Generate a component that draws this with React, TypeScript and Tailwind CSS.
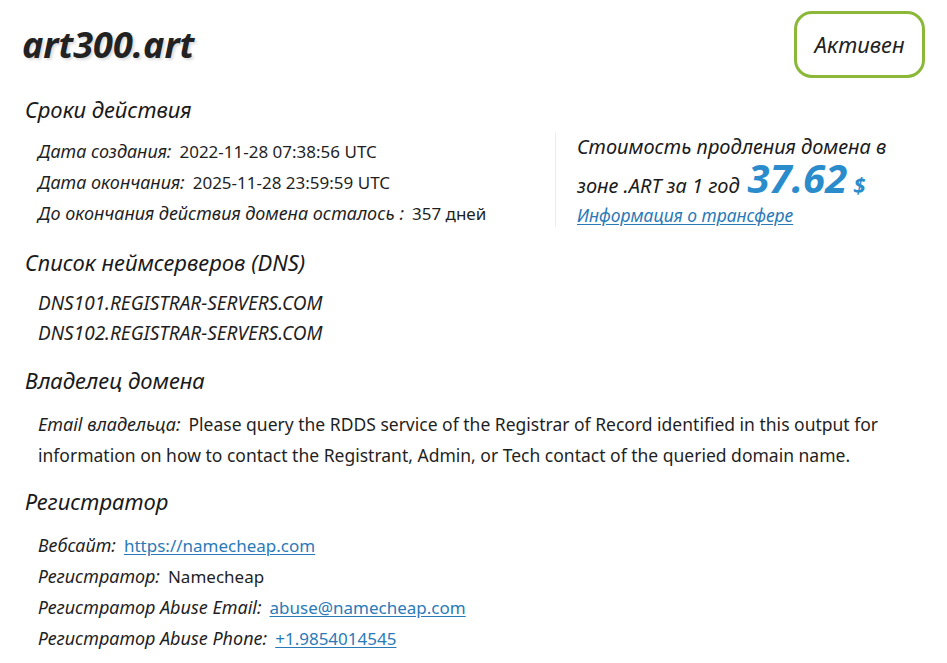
import React from 'react'

const FONT = { fontFamily: '"Noto Sans", "Open Sans", sans-serif' }

function Row({ label, children }: { label: string; children: React.ReactNode }) {
  return (
    <div className="h-[31px] flex items-center text-[17px] text-[#1f1f1f]">
      <span className="italic text-[18px]">{label}:</span>
      <span className="ml-2">{children}</span>
    </div>
  )
}

function Heading({ children }: { children: React.ReactNode }) {
  return <h2 className="text-[22px] italic text-[#1a1a1a] leading-[30px]">{children}</h2>
}

function Link({ children }: { children: React.ReactNode }) {
  return <a className="text-[#2a7ab8] underline underline-offset-2">{children}</a>
}

export default function App() {
  return (
    <div className="w-[947px] h-[663px] bg-white overflow-hidden px-[22px] pt-[11px]" style={FONT}>
      <div className="flex items-center justify-between">
        <h1 className="text-[36px] font-bold italic text-[#222] [text-shadow:2px_2px_3px_rgba(0,0,0,0.15)]">
          art300.art
        </h1>
        <div className="h-[67px] w-[131px] rounded-[18px] border-[3px] border-[#8cb83a] flex items-center justify-center text-[22px] italic text-[#222]">
          Активен
        </div>
      </div>

      <div className="flex mt-[16px]">
        <div className="w-[533px] pl-[3px]">
          <Heading>Сроки действия</Heading>
          <div className="pl-[13px] mt-[12px]">
            <Row label="Дата создания">2022-11-28 07:38:56 UTC</Row>
            <Row label="Дата окончания">2025-11-28 23:59:59 UTC</Row>
            <Row label="До окончания действия домена осталось ">357 дней</Row>
          </div>
        </div>
        <div className="mt-[38px] h-[95px] border-l border-[#ececec] pl-[21px] pt-px text-[#1a1a1a]">
          <div className="text-[20px] italic leading-[28px]">Стоимость продления домена в</div>
          <div className="text-[20px] italic leading-[34px] flex items-baseline">
            зоне .ART за 1 год
            <span className="ml-2 text-[40px] font-bold text-[#2b8ccc] leading-[34px]">37.62</span>
            <span className="ml-1.5 text-[22px] font-bold text-[#2b8ccc]">$</span>
          </div>
          <div className="text-[17.5px] italic leading-[24px]">
            <Link>Информация о трансфере</Link>
          </div>
        </div>
      </div>

      <div className="pl-[3px] mt-[18px]">
        <Heading>Список неймсерверов (DNS)</Heading>
        <div className="pl-[13px] mt-[11px] text-[19px] italic text-[#1f1f1f]">
          <div className="h-[30px] flex items-center">DNS101.REGISTRAR-SERVERS.COM</div>
          <div className="h-[30px] flex items-center">DNS102.REGISTRAR-SERVERS.COM</div>
        </div>
      </div>

      <div className="pl-[3px] mt-[17px]">
        <Heading>Владелец домена</Heading>
        <div className="pl-[13px] mt-[14px] text-[17.5px] leading-[31px] text-[#1f1f1f]">
          <span className="italic text-[18px]">Email владельца:</span>
          <span className="ml-2">
            Please query the RDDS service of the Registrar of Record identified in this output for information on
            how to contact the Registrant, Admin, or Tech contact of the queried domain name.
          </span>
        </div>
      </div>

      <div className="pl-[3px] mt-[15px]">
        <Heading>Регистратор</Heading>
        <div className="pl-[13px] mt-[14px]">
          <Row label="Вебсайт">
            <Link>https://namecheap.com</Link>
          </Row>
          <Row label="Регистратор">Namecheap</Row>
          <Row label="Регистратор Abuse Email">
            <Link>abuse@namecheap.com</Link>
          </Row>
          <Row label="Регистратор Abuse Phone">
            <Link>+1.9854014545</Link>
          </Row>
        </div>
      </div>
    </div>
  )
}
